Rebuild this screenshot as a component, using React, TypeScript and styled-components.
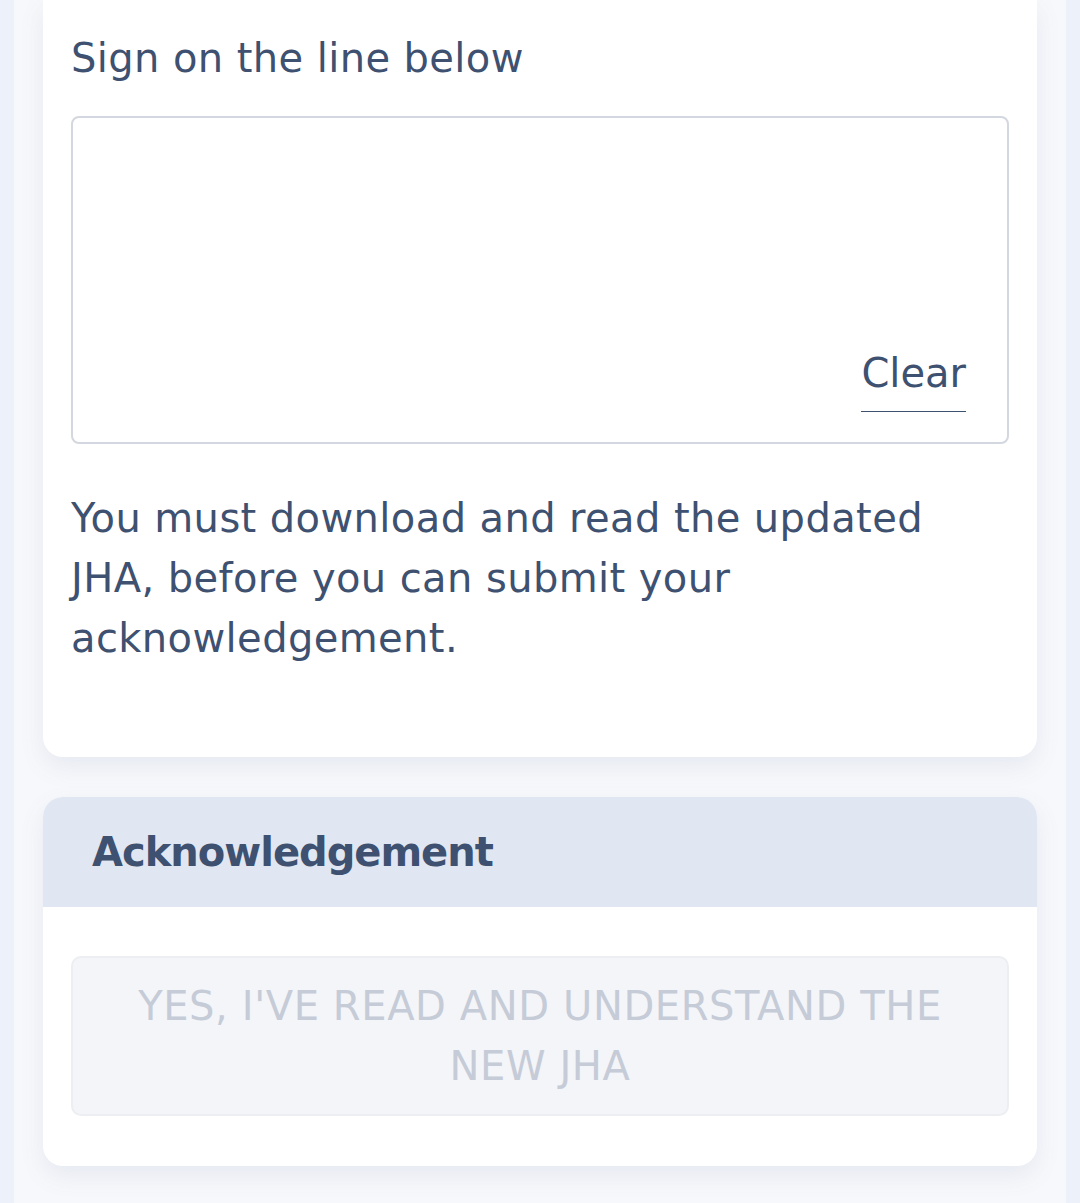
import styled, { createGlobalStyle } from "styled-components";

const GlobalStyle = createGlobalStyle`
  html, body {
    margin: 0;
    padding: 0;
    background-color: #edf2fa;
  }
  body {
    font-family: "DejaVu Sans", "Noto Sans", sans-serif;
    color: #3e5170;
  }
`;

const Page = styled.div`
  margin: 0 14px;
  min-height: 1203px;
  background-color: #f7f8fb;
  padding: 0 29px;
  box-sizing: border-box;
  display: flex;
  flex-direction: column;
  gap: 40px;
`;

const Card = styled.section<{ $cut?: boolean }>`
  background-color: #ffffff;
  border-radius: ${(p) => (p.$cut ? "0 0 20px 20px" : "20px")};
  box-shadow: 0 10px 24px rgba(90, 110, 160, 0.1);
  overflow: hidden;
`;

const CardBody = styled.div<{ $pad: string }>`
  padding: ${(p) => p.$pad};
`;

const Label = styled.div`
  font-size: 40px;
  line-height: 60px;
  letter-spacing: 0.4px;
  margin-bottom: 28px;
`;

const SignBox = styled.div`
  height: 328px;
  box-sizing: border-box;
  border: 2px solid #d3d7df;
  border-radius: 8px;
  display: flex;
  flex-direction: column;
  justify-content: flex-end;
  align-items: flex-end;
  padding: 0 41px 30px;
`;

const ClearButton = styled.button`
  font-family: inherit;
  font-size: 40px;
  line-height: 60px;
  color: #3e5170;
  background: none;
  border: none;
  border-bottom: 1.5px solid #3e5170;
  padding: 0 0 8px;
  cursor: pointer;
`;

const Notice = styled.p`
  margin: 44px 0 0;
  max-width: 900px;
  font-size: 40px;
  line-height: 60px;
  letter-spacing: 0.4px;
`;

const CardHeader = styled.div`
  background-color: #e1e7f2;
  padding: 25px 49px;
  font-size: 40px;
  line-height: 60px;
  font-weight: bold;
  letter-spacing: -1px;
`;

const AckButton = styled.button`
  width: 100%;
  font-family: inherit;
  font-size: 40px;
  line-height: 60px;
  letter-spacing: 0.6px;
  text-transform: uppercase;
  color: #c5cbd7;
  background-color: #f4f5f8;
  border: 2px solid #eceef2;
  border-radius: 10px;
  padding: 18px 40px;
  cursor: not-allowed;
`;

const App = () => {
  return (
    <>
      <GlobalStyle />
      <Page>
        <Card $cut>
          <CardBody $pad="28px 28px 89px">
            <Label>Sign on the line below</Label>
            <SignBox>
              <ClearButton>Clear</ClearButton>
            </SignBox>
            <Notice>
              You must download and read the updated JHA, before you can submit
              your acknowledgement.
            </Notice>
          </CardBody>
        </Card>
        <Card>
          <CardHeader>Acknowledgement</CardHeader>
          <CardBody $pad="49px 28px 50px">
            <AckButton disabled>Yes, I've read and understand the new JHA</AckButton>
          </CardBody>
        </Card>
      </Page>
    </>
  );
};

export default App;
